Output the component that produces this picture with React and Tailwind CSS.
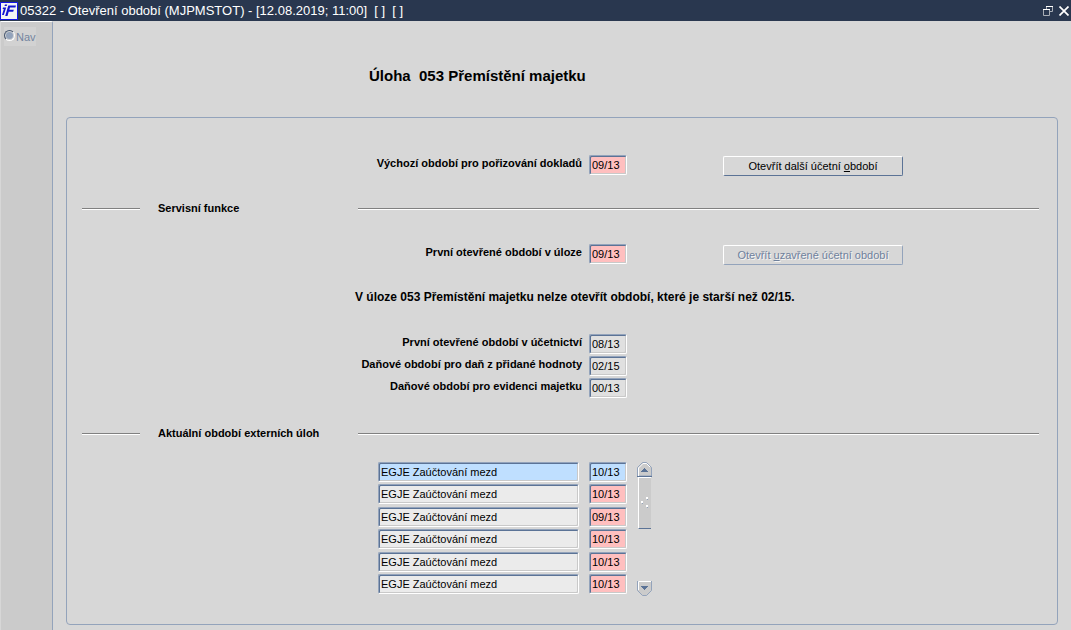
import clsx from 'clsx';

const externalTasks = [
    { name: 'EGJE Zaúčtování mezd', period: '10/13', active: true },
    { name: 'EGJE Zaúčtování mezd', period: '10/13' },
    { name: 'EGJE Zaúčtování mezd', period: '09/13' },
    { name: 'EGJE Zaúčtování mezd', period: '10/13' },
    { name: 'EGJE Zaúčtování mezd', period: '10/13' },
    { name: 'EGJE Zaúčtování mezd', period: '10/13' },
];

const TONES = {
    pink: 'bg-[#ffbfbf]',
    blue: 'bg-[#bfdfff]',
    light: 'bg-[#ebebeb]',
    gray: 'bg-[#e0e0e0]',
};

function Field({ tone, className, ...props }) {
    return (
        <input
            type="text"
            readOnly
            className={clsx(
                'h-5 shrink-0 rounded-[2px] border border-t-[#93a3bb] border-l-[#93a3bb] border-r-white border-b-white pl-[2px] text-[11px] leading-[18px] text-black outline-none',
                'shadow-[inset_1px_1px_0_#5b7396,inset_-1px_-1px_0_#c9c9c9]',
                TONES[tone],
                className
            )}
            {...props}
        />
    );
}

function PeriodRow({ id, label, value, tone, children }) {
    return (
        <div className="flex items-start">
            <label htmlFor={id} className="w-[500px] shrink-0 text-right font-bold leading-4">
                {label}
            </label>
            <Field id={id} tone={tone} defaultValue={value} className="ml-[7px] w-[38px]" />
            {children}
        </div>
    );
}

function ActionButton({ disabled, children }) {
    return (
        <button
            type="button"
            disabled={disabled}
            className={clsx(
                'mt-px ml-24 h-5 w-[180px] shrink-0 rounded-[2px] border border-t-white border-l-white text-[11px] leading-4',
                disabled
                    ? 'border-r-[#93a3bb] border-b-[#93a3bb] text-[#6f819c] [text-shadow:1px_1px_0_#f4f4f4]'
                    : 'border-r-[#5b7396] border-b-[#5b7396] text-black'
            )}
        >
            {children}
        </button>
    );
}

function SectionTitle({ children }) {
    return (
        <div className="flex h-5 items-center">
            <div className="h-[2px] w-[58px] border-b border-white bg-[#808080]" />
            <h2 className="ml-[18px] w-[200px] pb-[2px] font-bold leading-4">{children}</h2>
            <div className="h-[2px] flex-1 border-b border-white bg-[#808080]" />
        </div>
    );
}

function ScrollBar() {
    return (
        <div className="flex h-[134px] w-[15px] flex-col items-center">
            <button type="button" aria-label="Nahoru" className="h-[15px] w-[15px]">
                <svg width="15" height="15" viewBox="0 0 15 15">
                    <path d="M.5 14V5.5L5.5.5h4l5 5V14z" fill="#cbcbcb" stroke="#93a3bb" />
                    <path d="M1.5 14V6L6 1.5h3.500L13 5" fill="none" stroke="#fff" />
                    <path d="M0 14.500h15" stroke="#5b7396" />
                    <path d="M7 6h1v1h1v1h1v1h1v1H4V9h1V8h1V7h1z" fill="#5b7396" />
                </svg>
            </button>
            <div className="h-[52px] w-[13px] border-t border-b border-l border-t-white border-b-[#5b7396] border-l-white bg-[#cbcbcb]">
                <svg width="12" height="50" viewBox="0 0 12 50">
                    <path d="M7 19h2v2H7zM2 23h2v2H2zM7 27h2v2H7z" fill="#fff" />
                    <path d="M9 20v2H8v-1h1zM4 24v2H3v-1h1zM9 28v2H8v-1h1z" fill="#93a3bb" />
                </svg>
            </div>
            <button type="button" aria-label="Dolů" className="mt-auto h-[15px] w-[15px]">
                <svg width="15" height="15" viewBox="0 0 15 15">
                    <path d="M.5 0v9.500l5 5h4l5-5V0z" fill="#cbcbcb" stroke="#93a3bb" />
                    <path d="M1.500 9V.5H14" fill="none" stroke="#fff" />
                    <path d="M4 5h7v1h-1v1H9v1H8v1H7V8H6V7H5V6H4z" fill="#5b7396" />
                </svg>
            </button>
        </div>
    );
}

function TitleBar() {
    return (
        <header className="flex h-[21px] items-center bg-[#29374f] text-white">
            <svg width="18" height="18" viewBox="0 0 18 18" className="shrink-0">
                <path d="M.5.5h17v17H.5z" fill="#f4f4f4" stroke="#1414e6" />
                <path d="M5 2.500h2.200l-.5 1.500H4.500zM3 5.500h3.200L3.800 13H2l1.800-6H2.600z" fill="#1414d2" />
                <path d="M8.300 3.500H16l-.6 2H10l-.7 2.300h4.500l-.6 1.900H8.700L7.500 14H5.200z" fill="#1414d2" />
            </svg>
            <h1 className="ml-[2px] flex-1 whitespace-pre text-[13px] leading-5">
                {'05322 - Otevření období (MJPMSTOT) - [12.08.2019; 11:00]  [ ]  [ ]'}
            </h1>
            <button type="button" aria-label="Obnovit" className="mr-[6px]">
                <svg width="10" height="10" viewBox="0 0 10 10" fill="none">
                    <path d="M3.500 3V.5h6v5H7" stroke="#a9aeb6" />
                    <path d="M3 .5h7" stroke="#fff" />
                    <path d="M.5 3.500h6v6h-6z" stroke="#a9aeb6" />
                    <path d="M0 3.500h7" stroke="#fff" />
                </svg>
            </button>
            <button type="button" aria-label="Zavřít" className="mr-[2px]">
                <svg width="10" height="10" viewBox="0 0 10 10">
                    <path d="M.5.5l9 9M9.500.5l-9 9" stroke="#fff" strokeWidth="1.700" />
                </svg>
            </button>
        </header>
    );
}

export default function App() {
    return (
        <div className="flex min-h-screen flex-col bg-[#d7d7d7] font-['Liberation_Sans',Arial,sans-serif] text-[11px] text-black">
            <TitleBar />
            <div className="flex flex-1">
                <aside className="ml-px w-[52px] shrink-0 rounded-tr-[2px] border-t border-r border-t-white border-r-[#93a3bb] bg-[#cbcbcb] pt-[5px] pl-[3px]">
                    <label className="flex h-[19px] w-8 items-start bg-[#d2d2d2] text-[#7385a0]">
                        <input
                            type="radio"
                            name="nav"
                            className="mt-[3px] h-[11px] w-[11px] shrink-0 appearance-none rounded-full border border-t-[#4c5a70] border-r-white border-b-white border-l-[#4c5a70] bg-[#93a3bb] shadow-[inset_0_0_0_1px_#d2d2d2]"
                        />
                        <span className="ml-px leading-5">Nav</span>
                    </label>
                </aside>
                <main className="flex flex-1 flex-col pt-[45px] pr-[13px] pb-[5px] pl-[13px]">
                    <h2 className="ml-[303px] whitespace-pre text-[15px] font-bold leading-5">
                        {'Úloha  053 Přemístění majetku'}
                    </h2>
                    <section className="mt-[31px] flex-1 rounded-[4px] border border-[#93a3bb] pt-[37px] pr-[18px] pb-[27px] pl-[15px]">
                        <PeriodRow id="default-period" label="Výchozí období pro pořizování dokladů" value="09/13" tone="pink">
                            <ActionButton>
                                Otevřít další účetní <u>o</u>bdobí
                            </ActionButton>
                        </PeriodRow>

                        <div className="mt-[23px]">
                            <SectionTitle>Servisní funkce</SectionTitle>
                        </div>

                        <div className="mt-[25px]">
                            <PeriodRow id="first-open" label="První otevřené období v úloze" value="09/13" tone="pink">
                                <ActionButton disabled>
                                    Otevřít <u>u</u>zavřené účetní období
                                </ActionButton>
                            </PeriodRow>
                        </div>

                        <p className="mt-[22px] ml-[273px] text-[12px] font-bold leading-5">
                            V úloze 053 Přemístění majetku nelze otevřít období, které je starší než 02/15.
                        </p>

                        <div className="mt-[27px] flex flex-col gap-[2px]">
                            <PeriodRow id="accounting" label="První otevřené období v účetnictví" value="08/13" tone="gray" />
                            <PeriodRow id="vat" label="Daňové období pro daň z přidané hodnoty" value="02/15" tone="gray" />
                            <PeriodRow id="assets" label="Daňové období pro evidenci majetku" value="00/13" tone="gray" />
                        </div>

                        <div className="mt-[26px]">
                            <SectionTitle>Aktuální období externích úloh</SectionTitle>
                        </div>

                        <div className="mt-[18px] ml-[296px] flex gap-[10px]">
                            <ul className="flex h-[132px] flex-col justify-between">
                                {externalTasks.map((task, i) => (
                                    <li key={i} className="flex gap-[10px]">
                                        <Field
                                            aria-label={`Úloha ${i + 1}`}
                                            tone={task.active ? 'blue' : 'light'}
                                            defaultValue={task.name}
                                            className="w-[201px]"
                                        />
                                        <Field
                                            aria-label={`Období ${i + 1}`}
                                            tone={task.active ? 'blue' : 'pink'}
                                            defaultValue={task.period}
                                            className="w-[38px]"
                                        />
                                    </li>
                                ))}
                            </ul>
                            <ScrollBar />
                        </div>
                    </section>
                </main>
            </div>
        </div>
    );
}
